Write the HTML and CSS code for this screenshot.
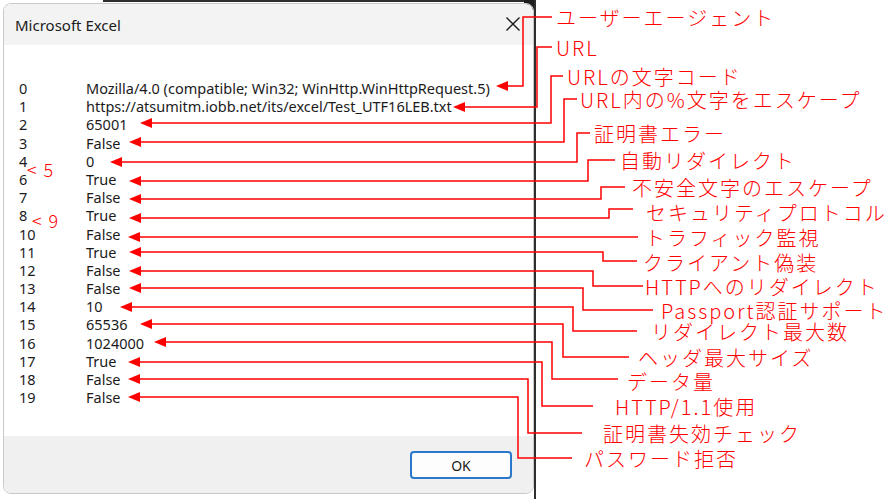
FILE: index.html
```html
<!DOCTYPE html>
<html lang="ja">
<head>
<meta charset="utf-8">
<title>Microsoft Excel</title>
<link rel="stylesheet" href="styles.css">
</head>
<body>
<div class="page">
  <div class="dialog-wrap">
    <div class="dialog">
      <div class="titlebar">
        <span class="title">Microsoft Excel</span>
        <svg class="close" width="14" height="14" viewBox="0 0 14 14"><path d="M0.5 0.5 L13.5 13.5 M13.5 0.5 L0.5 13.5"/></svg>
      </div>
      <div class="content">
        <div class="rows">
          <span class="k">0</span><span class="v">Mozilla/4.0 (compatible; Win32; WinHttp.WinHttpRequest.5)</span>
          <span class="k">1</span><span class="v">https://atsumitm.iobb.net/its/excel/Test_UTF16LEB.txt</span>
          <span class="k">2</span><span class="v">65001</span>
          <span class="k">3</span><span class="v">False</span>
          <span class="k">4</span><span class="v">0</span>
          <span class="k">6</span><span class="v">True</span>
          <span class="k">7</span><span class="v">False</span>
          <span class="k">8</span><span class="v">True</span>
          <span class="k">10</span><span class="v">False</span>
          <span class="k">11</span><span class="v">True</span>
          <span class="k">12</span><span class="v">False</span>
          <span class="k">13</span><span class="v">False</span>
          <span class="k">14</span><span class="v">10</span>
          <span class="k">15</span><span class="v">65536</span>
          <span class="k">16</span><span class="v">1024000</span>
          <span class="k">17</span><span class="v">True</span>
          <span class="k">18</span><span class="v">False</span>
          <span class="k">19</span><span class="v">False</span>
        </div>
      </div>
      <div class="footer"><button class="ok">OK</button></div>
    </div>
  </div>
  <svg class="annot" width="891" height="499" viewBox="0 0 891 499">
    <g class="lines">
      <path d="M507 86 H523 V17 H552"/>
      <path d="M464 107 H537 V47 H552"/>
      <path d="M151 123 H551 V76 H563"/>
      <path d="M140 142 H564 V99 H577"/>
      <path d="M121 162 H577 V133 H590"/>
      <path d="M140 181 H588 V160 H615"/>
      <path d="M140 199 H601 V187 H625"/>
      <path d="M140 218 H609 V209 H633"/>
      <path d="M139 237 H638"/>
      <path d="M140 252 H603 V261 H637"/>
      <path d="M140 271 H593 V286 H643"/>
      <path d="M140 288 H583 V310 H653"/>
      <path d="M131 307 H573 V331 H637"/>
      <path d="M151 324 H563 V357 H629"/>
      <path d="M165 342 H552 V379 H618"/>
      <path d="M139 362 H542 V406 H593"/>
      <path d="M139 379 H528 V433 H582"/>
      <path d="M139 397 H518 V458 H572"/>
    </g>
    <g class="heads">
      <polygon points="496,86 508,81 508,91"/>
      <polygon points="453,107 465,102 465,112"/>
      <polygon points="140,123 152,118 152,128"/>
      <polygon points="129,142 141,137 141,147"/>
      <polygon points="110,162 122,157 122,167"/>
      <polygon points="129,181 141,176 141,186"/>
      <polygon points="129,199 141,194 141,204"/>
      <polygon points="129,218 141,213 141,223"/>
      <polygon points="128,237 140,232 140,242"/>
      <polygon points="129,252 141,247 141,257"/>
      <polygon points="129,271 141,266 141,276"/>
      <polygon points="129,288 141,283 141,293"/>
      <polygon points="120,307 132,302 132,312"/>
      <polygon points="140,324 152,319 152,329"/>
      <polygon points="154,342 166,337 166,347"/>
      <polygon points="128,362 140,357 140,367"/>
      <polygon points="128,379 140,374 140,384"/>
      <polygon points="128,397 140,392 140,402"/>
    </g>
    <g class="labels">
      <text x="556" y="17">ユーザーエージェント</text>
      <text x="556" y="47">URL</text>
      <text x="567" y="76">URLの文字コード</text>
      <text x="580" y="99">URL内の%文字をエスケープ</text>
      <text x="594" y="133">証明書エラー</text>
      <text x="620" y="160">自動リダイレクト</text>
      <text x="632" y="187">不安全文字のエスケープ</text>
      <text x="646" y="212">セキュリティプロトコル</text>
      <text x="645" y="237">トラフィック監視</text>
      <text x="643" y="262">クライアント偽装</text>
      <text x="645" y="286">HTTPへのリダイレクト</text>
      <text x="661" y="310">Passport認証サポート</text>
      <text x="651" y="331">リダイレクト最大数</text>
      <text x="638" y="357">ヘッダ最大サイズ</text>
      <text x="627" y="381">データ量</text>
      <text x="615" y="406">HTTP/1.1使用</text>
      <text x="603" y="433">証明書失効チェック</text>
      <text x="584" y="458">パスワード拒否</text>
    </g>
    <g class="notes">
      <text x="27" y="169">&lt; 5</text>
      <text x="32" y="220">&lt; 9</text>
    </g>
  </svg>
</div>
</body>
</html>
```
FILE: styles.css
```css
* { box-sizing: border-box; }
html, body { margin: 0; padding: 0; background: #ffffff; }
body { width: 891px; height: 499px; overflow: hidden; }

.page {
  position: relative;
  width: 891px;
  height: 499px;
  display: flex;
  align-items: flex-start;
}

.dialog-wrap {
  position: relative;
  flex: none;
  width: 536px;
  height: 499px;
  padding: 3px 0 0 3px;
  border-right: 2px solid #2e2e2e;
}
.dialog-wrap::before {
  content: "";
  position: absolute;
  top: 0;
  left: 103px;
  right: 0;
  height: 2px;
  background: #2e2e2e;
}
.dialog-wrap::after {
  content: "";
  position: absolute;
  top: 0;
  right: 0;
  width: 10px;
  height: 10px;
  background: #1e1e1e;
}

.dialog {
  position: relative;
  z-index: 1;
  width: 531px;
  height: 491px;
  border: 1px solid #c9c9c9;
  border-radius: 8px;
  overflow: hidden;
  display: flex;
  flex-direction: column;
  font-family: "Noto Sans", "Open Sans", sans-serif;
  color: #1b1b1b;
}

.titlebar {
  flex: none;
  height: 41px;
  background: #f3f3f3;
  display: flex;
  align-items: center;
  justify-content: space-between;
  padding: 0 13px 0 11px;
}
.title { font-size: 15px; color: #1b1b1b; }
.close { display: block; margin-top: -1px; }
.close path { stroke: #1b1b1b; stroke-width: 1.4; fill: none; }

.content {
  flex: none;
  height: 391px;
  background: #ffffff;
  padding: 34px 0 0 15px;
}
.rows {
  display: grid;
  grid-template-columns: 67px auto;
  font-size: 14.5px;
  line-height: 18.18px;
  color: #1b1b1b;
}

.footer {
  flex: 1;
  background: #f0f0f0;
  display: flex;
  justify-content: flex-end;
  align-items: flex-start;
  padding: 15px 21px 0 0;
}
.ok {
  width: 102px;
  height: 28px;
  border: 2px solid #2a78cc;
  border-radius: 4px;
  background: #fdfdfd;
  font-family: "Noto Sans", "Open Sans", sans-serif;
  font-size: 14px;
  color: #1b1b1b;
  padding: 0;
}

.annot {
  position: absolute;
  top: 0;
  left: 0;
  pointer-events: none;
  z-index: 2;
}
.lines path { fill: none; stroke: #ff0000; stroke-width: 1.5; }
.heads polygon { fill: #ff0000; }
.labels text {
  font-family: "Noto Sans CJK JP", sans-serif;
  font-size: 20px;
  font-weight: 300;
  letter-spacing: 2px;
  fill: #ff0000;
  dominant-baseline: central;
}
.notes text {
  font-family: "Noto Sans CJK JP", sans-serif;
  font-size: 18px;
  font-weight: 300;
  word-spacing: 3px;
  fill: #ff0000;
  dominant-baseline: central;
}
```
